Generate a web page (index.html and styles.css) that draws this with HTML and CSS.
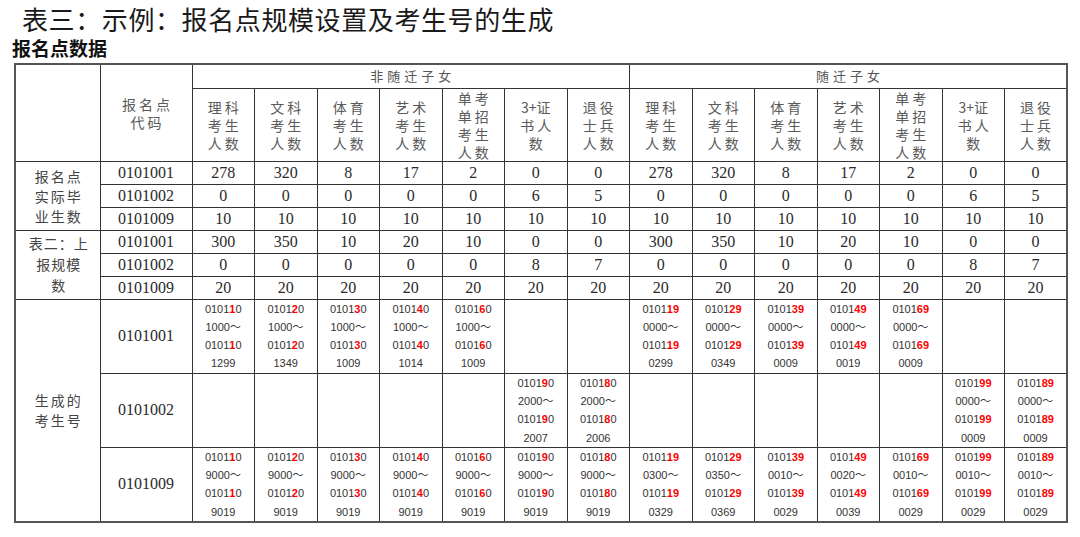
FILE: index.html
```html
<!DOCTYPE html>
<html lang="zh">
<head>
<meta charset="utf-8">
<title>表三：示例</title>
<link rel="stylesheet" href="styles.css">
</head>
<body>
<div class="title">表三：示例：报名点规模设置及考生号的生成</div>
<div class="sub">报名点数据</div>
<table class="tbl">
<colgroup>
<col class="c1"><col class="c2">
<col class="cd"><col class="cd"><col class="cd"><col class="cd"><col class="cd"><col class="cd"><col class="cd">
<col class="cd"><col class="cd"><col class="cd"><col class="cd"><col class="cd"><col class="cd"><col class="cd">
</colgroup>
<tr class="hg">
<td rowspan="2" class="hd"></td>
<td rowspan="2" class="hd">报名点<br>代码</td>
<td colspan="7" class="grp">非随迁子女</td>
<td colspan="7" class="grp">随迁子女</td>
</tr>
<tr class="hc">
<td class="hd">理科<br>考生<br>人数</td>
<td class="hd">文科<br>考生<br>人数</td>
<td class="hd">体育<br>考生<br>人数</td>
<td class="hd">艺术<br>考生<br>人数</td>
<td class="hd">单考<br>单招<br>考生<br>人数</td>
<td class="hd"><span class="tight">3+</span>证<br>书人<br>数</td>
<td class="hd">退役<br>士兵<br>人数</td>
<td class="hd">理科<br>考生<br>人数</td>
<td class="hd">文科<br>考生<br>人数</td>
<td class="hd">体育<br>考生<br>人数</td>
<td class="hd">艺术<br>考生<br>人数</td>
<td class="hd">单考<br>单招<br>考生<br>人数</td>
<td class="hd"><span class="tight">3+</span>证<br>书人<br>数</td>
<td class="hd">退役<br>士兵<br>人数</td>
</tr>
<tr class="dr">
<td rowspan="3" class="lb">报名点<br>实际毕<br>业生数</td>
<td>0101001</td>
<td>278</td><td>320</td><td>8</td><td>17</td><td>2</td><td>0</td><td>0</td>
<td>278</td><td>320</td><td>8</td><td>17</td><td>2</td><td>0</td><td>0</td>
</tr>
<tr class="dr">
<td>0101002</td>
<td>0</td><td>0</td><td>0</td><td>0</td><td>0</td><td>6</td><td>5</td>
<td>0</td><td>0</td><td>0</td><td>0</td><td>0</td><td>6</td><td>5</td>
</tr>
<tr class="dr">
<td>0101009</td>
<td>10</td><td>10</td><td>10</td><td>10</td><td>10</td><td>10</td><td>10</td>
<td>10</td><td>10</td><td>10</td><td>10</td><td>10</td><td>10</td><td>10</td>
</tr>
<tr class="dr">
<td rowspan="3" class="lb lb2">表二：上<br>报规模<br>数</td>
<td>0101001</td>
<td>300</td><td>350</td><td>10</td><td>20</td><td>10</td><td>0</td><td>0</td>
<td>300</td><td>350</td><td>10</td><td>20</td><td>10</td><td>0</td><td>0</td>
</tr>
<tr class="dr">
<td>0101002</td>
<td>0</td><td>0</td><td>0</td><td>0</td><td>0</td><td>8</td><td>7</td>
<td>0</td><td>0</td><td>0</td><td>0</td><td>0</td><td>8</td><td>7</td>
</tr>
<tr class="dr">
<td>0101009</td>
<td>20</td><td>20</td><td>20</td><td>20</td><td>20</td><td>20</td><td>20</td>
<td>20</td><td>20</td><td>20</td><td>20</td><td>20</td><td>20</td><td>20</td>
</tr>
<tr class="gr">
<td rowspan="3" class="lb">生成的<br>考生号</td>
<td>0101001</td>
<td class="g">0101<span class="r">1</span>0<br>1000～<br>0101<span class="r">1</span>0<br>1299</td>
<td class="g">0101<span class="r">2</span>0<br>1000～<br>0101<span class="r">2</span>0<br>1349</td>
<td class="g">0101<span class="r">3</span>0<br>1000～<br>0101<span class="r">3</span>0<br>1009</td>
<td class="g">0101<span class="r">4</span>0<br>1000～<br>0101<span class="r">4</span>0<br>1014</td>
<td class="g">0101<span class="r">6</span>0<br>1000～<br>0101<span class="r">6</span>0<br>1009</td>
<td class="g"></td>
<td class="g"></td>
<td class="g">0101<span class="r">19</span><br>0000～<br>0101<span class="r">19</span><br>0299</td>
<td class="g">0101<span class="r">29</span><br>0000～<br>0101<span class="r">29</span><br>0349</td>
<td class="g">0101<span class="r">39</span><br>0000～<br>0101<span class="r">39</span><br>0009</td>
<td class="g">0101<span class="r">49</span><br>0000～<br>0101<span class="r">49</span><br>0019</td>
<td class="g">0101<span class="r">69</span><br>0000～<br>0101<span class="r">69</span><br>0009</td>
<td class="g"></td>
<td class="g"></td>
</tr>
<tr class="gr">
<td>0101002</td>
<td class="g"></td>
<td class="g"></td>
<td class="g"></td>
<td class="g"></td>
<td class="g"></td>
<td class="g">0101<span class="r">9</span>0<br>2000～<br>0101<span class="r">9</span>0<br>2007</td>
<td class="g">0101<span class="r">8</span>0<br>2000～<br>0101<span class="r">8</span>0<br>2006</td>
<td class="g"></td>
<td class="g"></td>
<td class="g"></td>
<td class="g"></td>
<td class="g"></td>
<td class="g">0101<span class="r">99</span><br>0000～<br>0101<span class="r">99</span><br>0009</td>
<td class="g">0101<span class="r">89</span><br>0000～<br>0101<span class="r">89</span><br>0009</td>
</tr>
<tr class="gr">
<td>0101009</td>
<td class="g">0101<span class="r">1</span>0<br>9000～<br>0101<span class="r">1</span>0<br>9019</td>
<td class="g">0101<span class="r">2</span>0<br>9000～<br>0101<span class="r">2</span>0<br>9019</td>
<td class="g">0101<span class="r">3</span>0<br>9000～<br>0101<span class="r">3</span>0<br>9019</td>
<td class="g">0101<span class="r">4</span>0<br>9000～<br>0101<span class="r">4</span>0<br>9019</td>
<td class="g">0101<span class="r">6</span>0<br>9000～<br>0101<span class="r">6</span>0<br>9019</td>
<td class="g">0101<span class="r">9</span>0<br>9000～<br>0101<span class="r">9</span>0<br>9019</td>
<td class="g">0101<span class="r">8</span>0<br>9000～<br>0101<span class="r">8</span>0<br>9019</td>
<td class="g">0101<span class="r">19</span><br>0300～<br>0101<span class="r">19</span><br>0329</td>
<td class="g">0101<span class="r">29</span><br>0350～<br>0101<span class="r">29</span><br>0369</td>
<td class="g">0101<span class="r">39</span><br>0010～<br>0101<span class="r">39</span><br>0029</td>
<td class="g">0101<span class="r">49</span><br>0020～<br>0101<span class="r">49</span><br>0039</td>
<td class="g">0101<span class="r">69</span><br>0010～<br>0101<span class="r">69</span><br>0029</td>
<td class="g">0101<span class="r">99</span><br>0010～<br>0101<span class="r">99</span><br>0029</td>
<td class="g">0101<span class="r">89</span><br>0010～<br>0101<span class="r">89</span><br>0029</td>
</tr>
</table>
</body>
</html>
```
FILE: styles.css
```css
html, body {
  margin: 0;
  padding: 0;
  background: #ffffff;
}
body {
  font-family: "Liberation Serif", "Noto Sans CJK SC", serif;
  color: #222;
}
.title {
  font-family: "Noto Sans CJK SC", sans-serif;
  font-size: 26px;
  line-height: 30px;
  letter-spacing: 0.6px;
  color: #1a1a1a;
  padding: 4px 0 0 22px;
  height: 30px;
  white-space: nowrap;
}
.sub {
  font-family: "Noto Sans CJK SC", sans-serif;
  font-size: 19px;
  font-weight: bold;
  line-height: 22px;
  color: #111;
  padding-left: 12px;
  margin: 3px 0 4px;
  height: 22px;
}
.tbl {
  margin-left: 14px;
  width: 1052px;
  table-layout: fixed;
  border-collapse: collapse;
  border: 2px solid #555;
}
.c1 { width: 85px; }
.c2 { width: 92px; }
.cd { width: 62.5px; }
.tbl td {
  border: 1px solid #333;
  padding: 0;
  text-align: center;
  vertical-align: middle;
  font-size: 16px;
  line-height: 18px;
  color: #2a2a2a;
  overflow: hidden;
  white-space: nowrap;
}
.hg { height: 24px; }
.hc { height: 73px; }
.dr { height: 23px; }
.gr { height: 74px; }
.tbl td.hd {
  font-family: "Noto Sans CJK SC", sans-serif;
  font-size: 14px;
  line-height: 18px;
  letter-spacing: 3px;
  padding-left: 3px;
  color: #5a5a5a;
}
.tight {
  letter-spacing: 0;
}
.tbl td.grp {
  font-family: "Noto Sans CJK SC", sans-serif;
  font-size: 13px;
  letter-spacing: 4px;
  padding-left: 4px;
  color: #555;
}
.tbl td.lb {
  font-family: "Noto Sans CJK SC", sans-serif;
  font-size: 14px;
  line-height: 20px;
  letter-spacing: 2px;
  padding-left: 2px;
  color: #444;
}
.tbl td.lb2 {
  letter-spacing: 1px;
  line-height: 21px;
}
.tbl td.g {
  font-family: "Liberation Sans", "Noto Sans CJK SC", sans-serif;
  font-size: 11px;
  line-height: 18.3px;
  color: #333;
}
.r {
  color: #ff0000;
  font-weight: bold;
}
```
